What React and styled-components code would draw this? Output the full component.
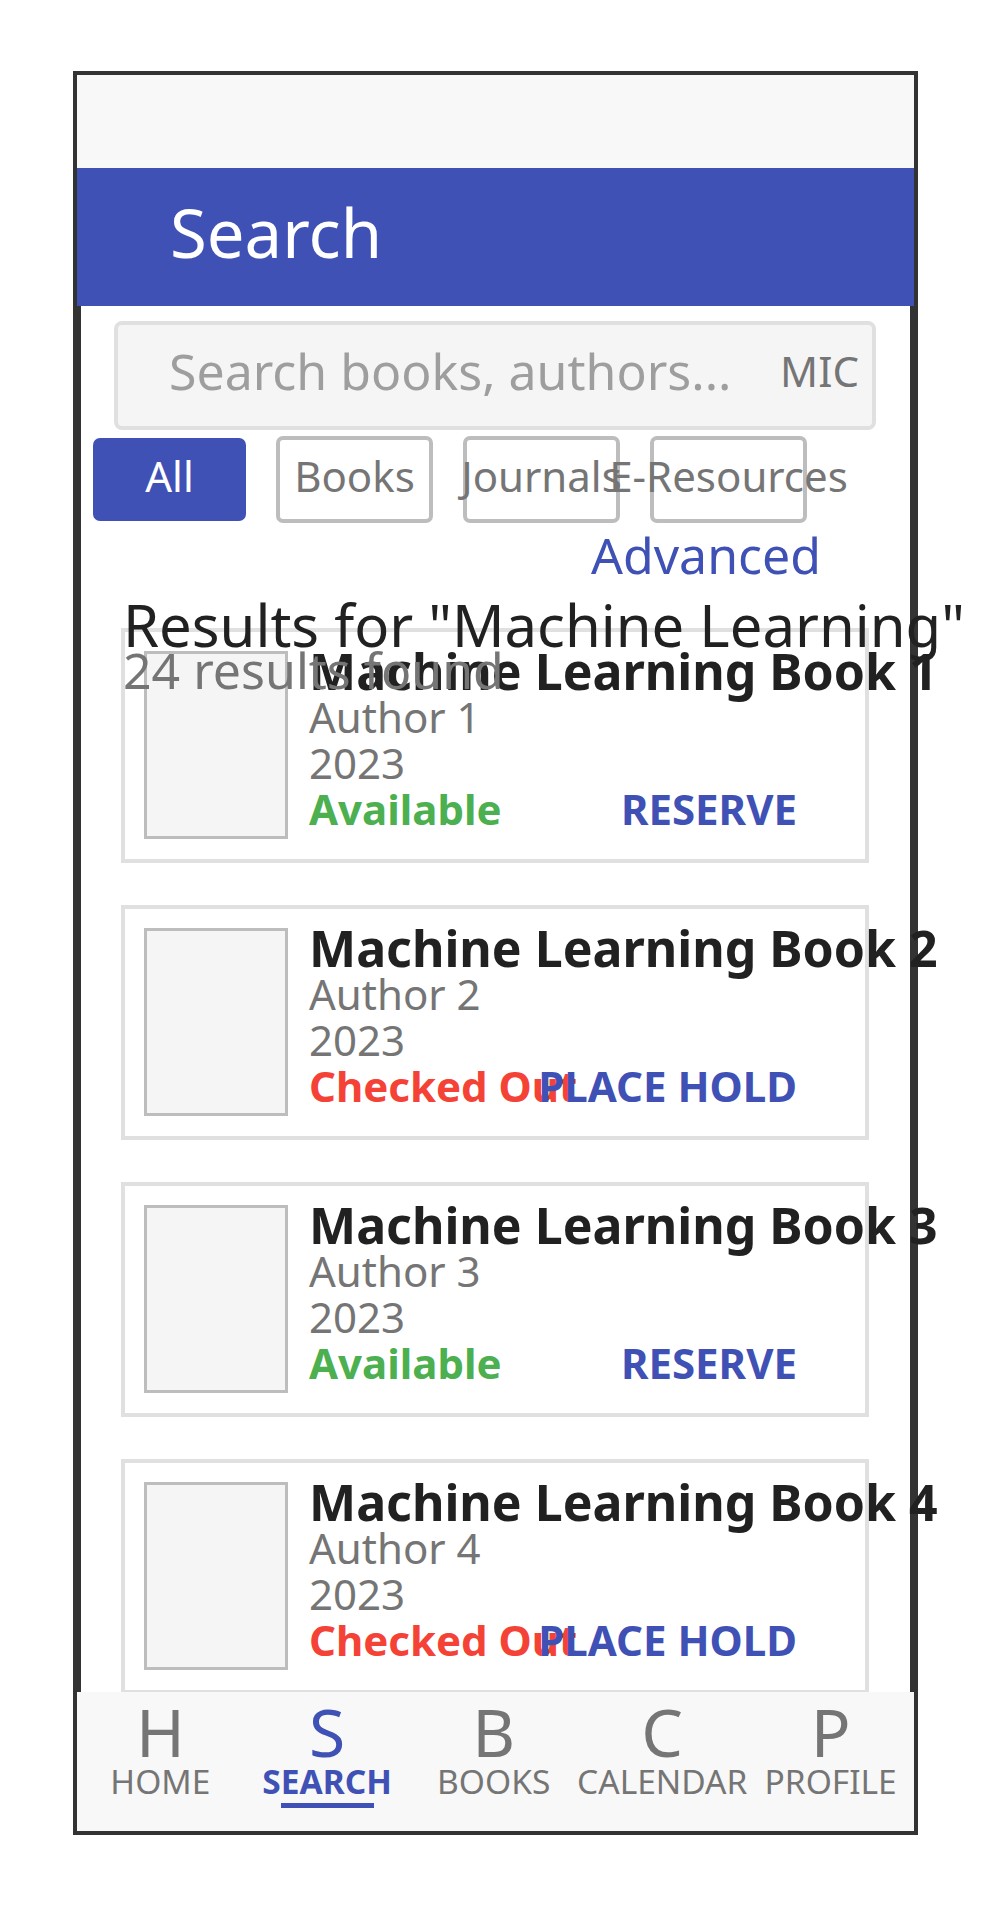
import styled, { createGlobalStyle } from 'styled-components';

const GlobalStyle = createGlobalStyle`
  * {
    box-sizing: border-box;
  }
  body {
    margin: 0;
    background: #fff;
    font-family: "Noto Sans", "Open Sans", sans-serif;
  }
`;

const Page = styled.div`
  padding: 71px 0 0 73px;
`;

const Phone = styled.div`
  width: 845px;
  height: 1764px;
  border: 4px solid #333;
  display: flex;
  flex-direction: column;
  background: #fff;
`;

const StatusBar = styled.div`
  flex: none;
  height: 93px;
  background: #f8f8f8;
`;

const Header = styled.header`
  flex: none;
  height: 138px;
  background: #3f51b5;
  display: flex;
  align-items: center;
  padding: 0 0 11px 93px;
`;

const HeaderTitle = styled.h1`
  margin: 0;
  font-size: 67px;
  font-weight: 400;
  color: #fff;
`;

const Content = styled.main`
  flex: none;
  height: 1386px;
  border-left: 4px solid #333;
  border-right: 4px solid #333;
  padding-top: 15px;
`;

const SearchBox = styled.div`
  margin-left: 33px;
  width: 762px;
  height: 109px;
  border: 4px solid #e0e0e0;
  border-radius: 8px;
  background: #f5f5f5;
  display: flex;
  align-items: center;
  padding: 0 13px 10px 51px;
`;

const SearchInput = styled.input`
  flex: 1;
  min-width: 0;
  border: none;
  outline: none;
  background: transparent;
  padding: 0;
  font-family: inherit;
  font-size: 50px;
  color: #212121;

  &::placeholder {
    color: #9e9e9e;
  }
`;

const Mic = styled.span`
  font-size: 42px;
  color: #757575;
`;

const ChipRow = styled.div`
  margin-top: 6px;
  padding-left: 12px;
  height: 87px;
  display: flex;
  align-items: center;
  gap: 30px;
`;

const Chip = styled.button`
  flex: none;
  display: flex;
  align-items: center;
  justify-content: center;
  padding: 0 0 8px;
  white-space: nowrap;
  font-family: inherit;
  font-size: 42px;
  border-radius: 7px;
  cursor: pointer;
  width: ${p => (p.$active ? '153px' : '157px')};
  height: ${p => (p.$active ? '83px' : '87px')};
  background: ${p => (p.$active ? '#3f51b5' : '#fff')};
  color: ${p => (p.$active ? '#fff' : '#757575')};
  border: ${p => (p.$active ? 'none' : '4px solid #bdbdbd')};
`;

const AdvancedRow = styled.div`
  margin-top: 2px;
  display: flex;
  justify-content: flex-end;
  padding-right: 89px;
`;

const AdvancedLink = styled.button`
  border: none;
  background: none;
  padding: 0;
  font-family: inherit;
  font-size: 50px;
  line-height: 60px;
  color: #3f51b5;
  cursor: pointer;
`;

const Results = styled.section`
  padding: 0 41px 0 40px;
`;

const ResultsHeader = styled.div`
  position: relative;
  z-index: 1;
  margin: 15px 0 0 2px;
  height: 28px;
  white-space: nowrap;
`;

const ResultsTitle = styled.h2`
  margin: 0;
  font-size: 58px;
  font-weight: 400;
  line-height: 50px;
  color: #212121;
`;

const ResultsCount = styled.p`
  margin: 0;
  font-size: 50px;
  line-height: 41px;
  color: #757575;
`;

const Card = styled.article`
  height: 235px;
  border: 4px solid #e0e0e0;
  padding: 19px;
  margin-bottom: 42px;
  display: flex;
  align-items: flex-start;
  gap: 21px;
`;

const Cover = styled.div`
  flex: none;
  width: 144px;
  height: 188px;
  border: 3px solid #bdbdbd;
  background: #f5f5f5;
`;

const Info = styled.div`
  flex: 1;
  min-width: 0;
  display: flex;
  flex-direction: column;
`;

const BookTitle = styled.h3`
  margin: 0 0 3px;
  font-size: 50px;
  font-weight: 700;
  line-height: 40px;
  color: #212121;
  white-space: nowrap;
`;

const Meta = styled.div`
  font-size: 42px;
  line-height: 46px;
  color: #757575;
`;

const ActionRow = styled.div`
  display: grid;
  width: 488px;
  font-size: 42px;
  font-weight: 700;
  line-height: 46px;
`;

const Status = styled.span`
  grid-area: 1 / 1;
  justify-self: start;
  white-space: nowrap;
  color: ${p => (p.$available ? '#4caf50' : '#f44336')};
`;

const Action = styled.button`
  grid-area: 1 / 1;
  justify-self: end;
  border: none;
  background: none;
  padding: 0;
  font: inherit;
  white-space: nowrap;
  color: #3f51b5;
  cursor: pointer;
`;

const Nav = styled.nav`
  flex: none;
  height: 139px;
  background: #f8f8f8;
  display: flex;
  padding-top: 6px;
`;

const Tab = styled.div`
  flex: 1;
  display: flex;
  flex-direction: column;
  align-items: center;
  color: ${p => (p.$active ? '#3f51b5' : '#757575')};
`;

const TabIcon = styled.span`
  font-size: 66px;
  line-height: 66px;
`;

const TabLabel = styled.span`
  font-size: 33.5px;
  line-height: 34px;
  font-weight: ${p => (p.$active ? 700 : 400)};
  white-space: nowrap;
`;

const TabUnderline = styled.span`
  margin-top: 5px;
  width: 93px;
  height: 5px;
  background: #3f51b5;
`;

const filters = ['All', 'Books', 'Journals', 'E-Resources'];

const books = [1, 2, 3, 4].map(n => ({
  id: n,
  title: `Machine Learning Book ${n}`,
  author: `Author ${n}`,
  year: 2023,
  available: n % 2 === 1,
}));

const tabs = [
  { icon: 'H', label: 'HOME' },
  { icon: 'S', label: 'SEARCH', active: true },
  { icon: 'B', label: 'BOOKS' },
  { icon: 'C', label: 'CALENDAR' },
  { icon: 'P', label: 'PROFILE' },
];

const App = () => {
  return (
    <Page>
      <GlobalStyle />
      <Phone>
        <StatusBar />
        <Header>
          <HeaderTitle>Search</HeaderTitle>
        </Header>
        <Content>
          <SearchBox>
            <SearchInput placeholder="Search books, authors..." />
            <Mic>MIC</Mic>
          </SearchBox>
          <ChipRow>
            {filters.map((f, i) => (
              <Chip key={f} $active={i === 0}>
                {f}
              </Chip>
            ))}
          </ChipRow>
          <AdvancedRow>
            <AdvancedLink>Advanced</AdvancedLink>
          </AdvancedRow>
          <Results>
            <ResultsHeader>
              <ResultsTitle>Results for "Machine Learning"</ResultsTitle>
              <ResultsCount>24 results found</ResultsCount>
            </ResultsHeader>
            {books.map(book => (
              <Card key={book.id}>
                <Cover />
                <Info>
                  <BookTitle>{book.title}</BookTitle>
                  <Meta>{book.author}</Meta>
                  <Meta>{book.year}</Meta>
                  <ActionRow>
                    <Status $available={book.available}>
                      {book.available ? 'Available' : 'Checked Out'}
                    </Status>
                    <Action>{book.available ? 'RESERVE' : 'PLACE HOLD'}</Action>
                  </ActionRow>
                </Info>
              </Card>
            ))}
          </Results>
        </Content>
        <Nav>
          {tabs.map(tab => (
            <Tab key={tab.label} $active={tab.active}>
              <TabIcon>{tab.icon}</TabIcon>
              <TabLabel $active={tab.active}>{tab.label}</TabLabel>
              {tab.active && <TabUnderline />}
            </Tab>
          ))}
        </Nav>
      </Phone>
    </Page>
  );
};

export default App;
